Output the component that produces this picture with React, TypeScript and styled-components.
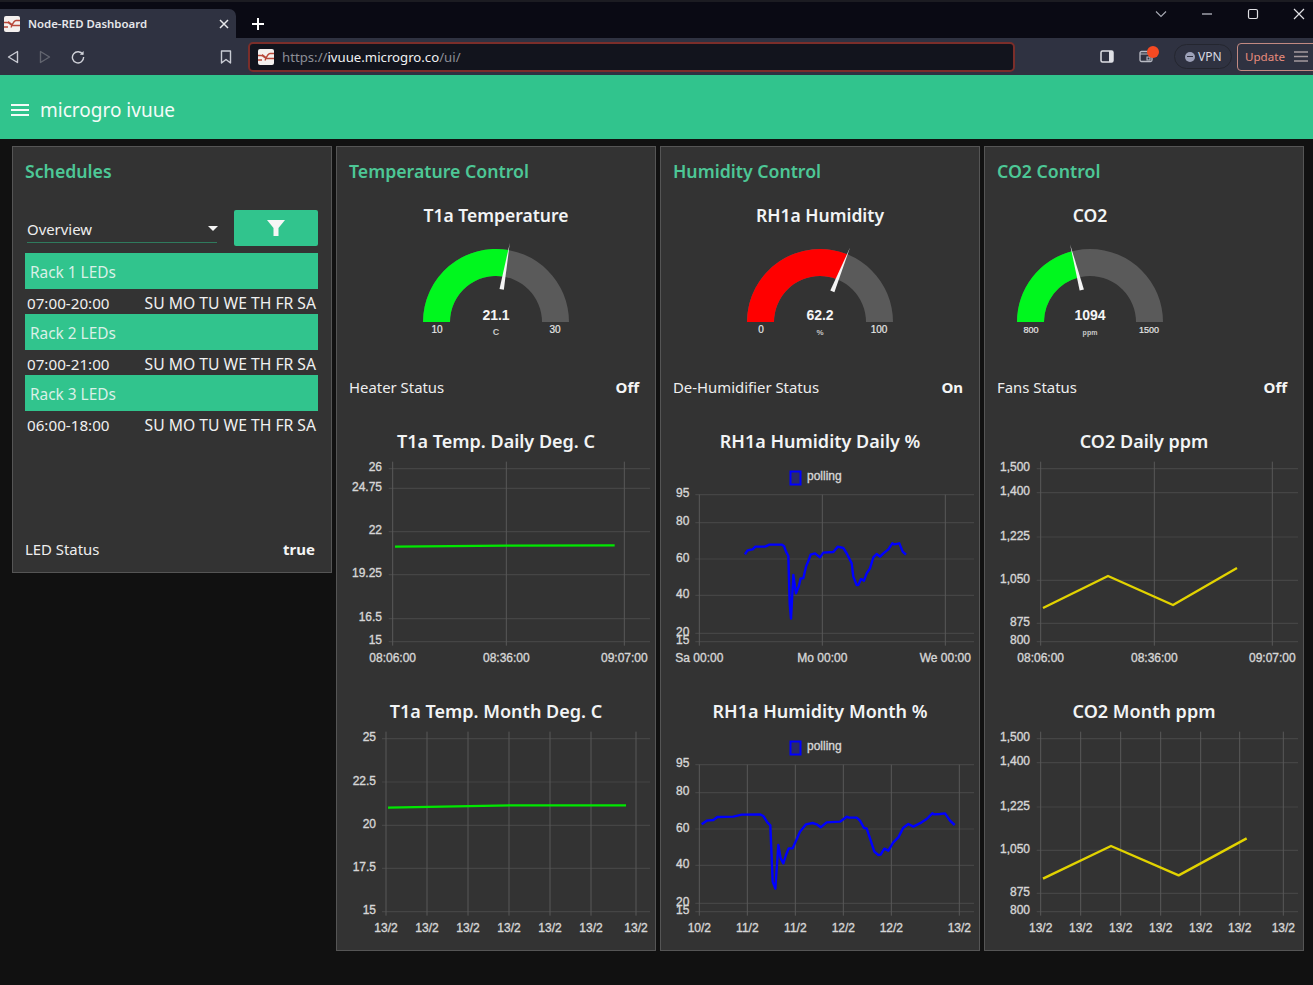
import React from "react";
import styled, { createGlobalStyle } from "styled-components";

const GREEN = "#31c48d";
const UI_FONT = `"Noto Sans", "Open Sans", sans-serif`;
const CHART_FONT = `"Liberation Sans", Arial, sans-serif`;

const Global = createGlobalStyle`
  html, body { margin: 0; padding: 0; background: #111111; }
  body { font-family: ${UI_FONT}; color: #eeeeee; }
  #root { min-height: 985px; }
`;

const Page = styled.div`
  width: 1313px;
  height: 985px;
  overflow: hidden;
  display: flex;
  flex-direction: column;
  background: #111111;
`;

/* ---------- browser chrome ---------- */
const TabStrip = styled.div`
  height: 38px;
  flex: none;
  display: flex;
  align-items: flex-end;
  background: #0a0a14;
  border-top: 2px solid #1c1c22;
  box-sizing: border-box;
`;
const Tab = styled.div`
  width: 236px;
  height: 29px;
  display: flex;
  align-items: center;
  box-sizing: border-box;
  padding: 0 7px 0 4px;
  background: #2f3241;
  border-top-right-radius: 7px;
`;
const TabTitle = styled.span`
  margin-left: 8px;
  flex: 1;
  font-size: 11.4px;
  font-weight: 600;
  color: #e6e7ea;
  white-space: nowrap;
`;
const NewTab = styled.div`
  width: 16px;
  height: 29px;
  margin-left: 15px;
  display: flex;
  align-items: center;
`;
const WindowControls = styled.div`
  margin-left: auto;
  align-self: flex-start;
  display: flex;
  align-items: flex-start;
  padding-top: 6px;
  gap: 34px;
  margin-right: 8px;
`;
const Toolbar = styled.div`
  height: 37px;
  flex: none;
  display: flex;
  align-items: center;
  background: #2f3241;
`;
const NavIcons = styled.div`
  width: 248px;
  flex: none;
  display: flex;
  align-items: center;
  padding-left: 6px;
  box-sizing: border-box;
`;
const NavSlot = styled.div<{ $w: number }>`
  width: ${(p) => p.$w}px;
  flex: none;
  display: flex;
  align-items: center;
`;
const UrlBar = styled.div`
  width: 767px;
  height: 30px;
  flex: none;
  display: flex;
  align-items: center;
  box-sizing: border-box;
  padding-left: 8px;
  background: #12141d;
  border: 2px solid #7b2e2a;
  border-radius: 5px;
`;
const UrlText = styled.span`
  margin-left: 8px;
  font-size: 13.2px;
  color: #8c8e96;
`;
const UrlHost = styled.span`
  color: #f0f1f3;
`;
const ToolbarRight = styled.div`
  flex: none;
  display: flex;
  align-items: center;
  padding-left: 85px;
`;
const VpnPill = styled.div`
  width: 58px;
  height: 25px;
  margin-left: 21px;
  flex: none;
  box-sizing: border-box;
  display: flex;
  align-items: center;
  gap: 3px;
  padding-left: 10px;
  border: 1px solid #24262f;
  border-radius: 13px;
  font-size: 12px;
  color: #d8dae2;
`;
const VpnDot = styled.span`
  width: 10px;
  height: 10px;
  border-radius: 50%;
  background: #9da1b8;
  display: flex;
  align-items: center;
  justify-content: center;
  &::after {
    content: "";
    width: 6px;
    height: 1.5px;
    background: #2f3241;
  }
`;
const UpdateButton = styled.div`
  margin-left: 5px;
  width: 80px;
  height: 28px;
  flex: none;
  box-sizing: border-box;
  display: flex;
  align-items: center;
  gap: 9px;
  padding-left: 7px;
  border: 1px solid #c28a82;
  border-radius: 4px;
  font-size: 11.6px;
  color: #e98d7e;
`;
const ToolIcon = styled.div<{ $ml: number }>`
  position: relative;
  margin-left: ${(p) => p.$ml}px;
  display: flex;
  flex: none;
`;
const Badge = styled.span`
  position: absolute;
  top: -4px;
  right: -6px;
  width: 12px;
  height: 12px;
  border-radius: 50%;
  background: #f64a22;
`;

/* ---------- dashboard header ---------- */
const AppBar = styled.header`
  height: 64px;
  flex: none;
  box-sizing: border-box;
  display: flex;
  align-items: center;
  padding: 6px 0 0 11px;
  gap: 11px;
  background: ${GREEN};
  color: #ffffff;
`;
const AppTitle = styled.h1`
  margin: 0;
  font-size: 19px;
  font-weight: 400;
  color: #f4fbf8;
`;
const Board = styled.main`
  display: flex;
  align-items: flex-start;
  gap: 4px;
  padding: 7px 0 0 12px;
`;
const Card = styled.section`
  width: 320px;
  flex: none;
  box-sizing: border-box;
  display: flex;
  flex-direction: column;
  background: #333333;
  border: 1px solid #555555;
`;
const CardTitle = styled.h2`
  margin: 0;
  height: 48px;
  box-sizing: border-box;
  padding: 0 0 0 12px;
  display: flex;
  align-items: center;
  font-size: 17.7px;
  font-weight: 600;
  color: #4dc796;
`;
const WidgetTitle = styled.h3<{ $top?: number }>`
  margin: ${(p) => p.$top ?? 0}px 0 0;
  height: 36px;
  box-sizing: border-box;
  padding-bottom: 1px;
  display: flex;
  align-items: center;
  justify-content: center;
  font-size: 18px;
  font-weight: 600;
  color: #f2f4f5;
`;
const GaugeWidget = styled.div<{ $width: number }>`
  width: ${(p) => p.$width}px;
  display: flex;
  flex-direction: column;
`;
const GaugeHeading = styled(WidgetTitle)`
  margin-top: 2px;
  margin-bottom: 2px;
  padding-bottom: 1px;
  font-size: 17.5px;
`;
const GaugeSvg = styled.svg`
  display: block;
  align-self: center;
  width: 190px;
  height: 133px;
`;
const StatusRow = styled.div<{ $top?: number; $bottom?: number }>`
  height: 40px;
  box-sizing: border-box;
  margin: ${(p) => p.$top ?? 0}px 0 ${(p) => p.$bottom ?? 0}px;
  padding: 0 16px 2px 12px;
  display: flex;
  align-items: baseline;
  justify-content: space-between;
  line-height: 38px;
  font-size: 14.9px;
  color: #eeeeee;
`;
const StatusValue = styled.span`
  font-weight: 700;
  font-size: 15px;
  color: #f5f5f5;
`;
const ChartSvg = styled.svg<{ $gap: number }>`
  display: block;
  width: 318px;
  height: 221px;
  margin-bottom: ${(p) => p.$gap}px;
`;

/* ---------- schedules ---------- */
const Controls = styled.div`
  height: 36px;
  margin: 15px 13px 7px 12px;
  display: flex;
  justify-content: space-between;
`;
const SelectBox = styled.div`
  position: relative;
  width: 190px;
  margin-left: 2px;
  height: 33px;
  box-sizing: border-box;
  display: flex;
  align-items: flex-end;
  padding-bottom: 3px;
  border-bottom: 1px solid #2f7a5d;
  font-size: 14.9px;
  color: #eeeeee;
  &::after {
    content: "";
    position: absolute;
    right: -1px;
    top: 16px;
    border-left: 5px solid transparent;
    border-right: 5px solid transparent;
    border-top: 5px solid #f5f5f5;
  }
`;
const FilterButton = styled.div`
  width: 84px;
  height: 36px;
  display: flex;
  align-items: center;
  justify-content: center;
  background: ${GREEN};
  border-radius: 2px;
`;
const RackHeader = styled.div`
  height: 36px;
  box-sizing: border-box;
  margin: 0 13px 0 12px;
  padding: 2px 0 0 5px;
  display: flex;
  align-items: center;
  background: ${GREEN};
  font-size: 15.4px;
  color: #d9f0e7;
`;
const ScheduleRow = styled.div`
  height: 25px;
  box-sizing: border-box;
  margin: 0 15px 0 14px;
  display: flex;
  align-items: baseline;
  justify-content: space-between;
  line-height: 28px;
  font-size: 15.2px;
  color: #f0f0f0;
  white-space: nowrap;
`;
const DayList = styled.span`
  font-size: 15.7px;
`;

/* ---------- drawings ---------- */
const Favicon = () => (
  <svg width="16" height="16" viewBox="0 0 16 16" style={{ flex: "none" }}>
    <rect width="16" height="16" rx="2" fill="#f4f0ee" />
    <path d="M0 6.5h3c3 0 3 3 6 3h7M4 5.5l4 3M7 11.5c2-5 3-7 5-7h4M0 11h4" stroke="#b8483a" strokeWidth="1.3" fill="none" />
  </svg>
);

type Pt = [number, number];
const polar = (cx: number, cy: number, r: number, frac: number): Pt => {
  const a = Math.PI * (1 - frac);
  return [cx + r * Math.cos(a), cy - r * Math.sin(a)];
};
const sector = (cx: number, cy: number, R: number, r: number, from: number, to: number) => {
  const [ax, ay] = polar(cx, cy, R, from);
  const [bx, by] = polar(cx, cy, R, to);
  const [dx, dy] = polar(cx, cy, r, to);
  const [ex, ey] = polar(cx, cy, r, from);
  return `M${ax} ${ay}A${R} ${R} 0 0 1 ${bx} ${by}L${dx} ${dy}A${r} ${r} 0 0 0 ${ex} ${ey}Z`;
};

type GaugeProps = {
  value: string;
  unit: string;
  min: string;
  max: string;
  frac: number;
  color: string;
  unitSize: number;
  rangeSize: number;
};
const Gauge = ({ value, unit, min, max, frac, color, unitSize, rangeSize }: GaugeProps) => {
  const cx = 95;
  const cy = 87;
  const a = Math.PI * (1 - frac);
  const nx = -Math.sin(a) * 2.2;
  const ny = -Math.cos(a) * 2.2;
  const [bx, by] = polar(cx, cy, 33, frac);
  const [tx, ty] = polar(cx, cy, 80, frac);
  return (
    <GaugeSvg viewBox="0 0 190 133">
      <path d={sector(cx, cy, 73, 46, 0, 1)} fill="#5a5a5a" />
      <path d={sector(cx, cy, 73, 46, 0, frac)} fill={color} />
      <path d={`M${bx + nx} ${by + ny}L${tx} ${ty}L${bx - nx} ${by - ny}Z`} fill="#f4f4f4" />
      <g fontFamily={CHART_FONT} textAnchor="middle" fill="#e6e6e6">
        <text x={cx} y={85} fontSize="14" fontWeight="700" fill="#f5f5f5">{value}</text>
        <text x={cx} y={100} fontSize={unitSize} fontWeight="700" fill="#c8c8c8">{unit}</text>
        <text x={cx - 59} y={98} fontSize={rangeSize} stroke="#e6e6e6" strokeWidth="0.2">{min}</text>
        <text x={cx + 59} y={98} fontSize={rangeSize} stroke="#e6e6e6" strokeWidth="0.2">{max}</text>
      </g>
    </GaugeSvg>
  );
};

type Tick = [string, number];
type ChartProps = {
  yTicks: Tick[];
  xTicks: Tick[];
  labelRight: number;
  left: number;
  line: Pt[];
  color: string;
  legend?: boolean;
  gap?: number;
  top: number;
};
const Chart = ({ yTicks, xTicks, labelRight, left, line, color, legend, gap = 0, top }: ChartProps) => {
  const px = (v: number) => v / 3;
  const py = (v: number) => v / 3 - 29;
  const bottom = py(635);
  return (
    <ChartSvg $gap={gap} viewBox="1 0 318 221">
      {yTicks.map(([t, y]) => (
        <line key={t + y} x1={px(left) - 4} x2={314} y1={py(y)} y2={py(y)} stroke="#454545" strokeWidth="1.2" />
      ))}
      {xTicks.map(([t, x]) => (
        <line key={t + x} x1={px(x)} x2={px(x)} y1={py(top)} y2={bottom + 4} stroke="#585858" strokeWidth="1" />
      ))}
      <g fontFamily={CHART_FONT} fontSize="12" fill="#d6d6d6" stroke="#d6d6d6" strokeWidth="0.35">
        {yTicks.map(([t, y]) => (
          <text key={t + y} x={px(labelRight)} y={py(y) + 2.5} textAnchor="end">{t}</text>
        ))}
        {xTicks.map(([t, x]) => (
          <text key={t + x} x={px(x)} y={bottom + 20} textAnchor="middle">{t}</text>
        ))}
      </g>
      {legend && (
        <g>
          <rect x={130.5} y={12.5} width={10} height={13} fill="#2a2a66" stroke="#0000ff" strokeWidth="2" />
          <text x={147} y={21} fontFamily={CHART_FONT} fontSize="12" fill="#d6d6d6" stroke="#d6d6d6" strokeWidth="0.35">polling</text>
        </g>
      )}
      <polyline
        points={line.map(([x, y]) => `${px(x)},${py(y)}`).join(" ")}
        fill="none"
        stroke={color}
        strokeWidth="2.4"
        strokeLinejoin="round"
      />
    </ChartSvg>
  );
};

/* ---------- data ---------- */
const HUM_Y: Tick[] = [["95", 194], ["80", 278], ["60", 387], ["40", 496], ["20", 610], ["15", 635]];
const TEMP_Y: Tick[] = [["26", 116], ["24.75", 175], ["22", 305], ["19.25", 434], ["16.5", 566], ["15", 635]];
const TEMP_M_Y: Tick[] = [["25", 116], ["22.5", 246], ["20", 376], ["17.5", 505], ["15", 635]];
const CO2_Y: Tick[] = [["1,500", 116], ["1,400", 188], ["1,225", 321], ["1,050", 451], ["875", 580], ["800", 635]];

const TIME_X: Tick[] = [["08:06:00", 170], ["08:36:00", 511], ["09:07:00", 865]];
const D_X: Tick[] = [["Sa 00:00", 118], ["Mo 00:00", 487], ["We 00:00", 856]];
const HM_X: Tick[] = [["10/2", 118], ["11/2", 262], ["11/2", 406], ["12/2", 550], ["12/2", 694], ["13/2", 898]];
const TM_X: Tick[] = [["13/2", 150], ["13/2", 273], ["13/2", 396], ["13/2", 519], ["13/2", 642], ["13/2", 765], ["13/2", 900]];
const CM_X: Tick[] = [["13/2", 170], ["13/2", 290], ["13/2", 410], ["13/2", 530], ["13/2", 650], ["13/2", 767], ["13/2", 898]];

const HUM_DAILY: Pt[] = [[255,373],[262,362],[272,359],[278,358],[286,350],[315,350],[328,344],[365,344],[372,348],[378,365],[385,378],[389,520],[393,566],[400,435],[408,490],[416,470],[422,445],[430,445],[438,410],[445,393],[452,374],[465,370],[480,382],[490,368],[520,366],[533,350],[550,354],[560,370],[575,400],[580,440],[590,465],[595,465],[603,447],[612,452],[620,430],[630,415],[640,382],[650,372],[660,380],[670,370],[685,358],[697,340],[703,343],[718,340],[728,365],[738,374]];
const HUM_MONTH: Pt[] = [[125,373],[140,362],[160,360],[172,351],[220,350],[245,344],[300,343],[310,348],[322,367],[331,376],[338,545],[346,566],[355,435],[362,475],[370,490],[378,465],[386,445],[398,445],[420,395],[438,373],[458,369],[470,373],[482,382],[500,367],[540,365],[560,350],[567,353],[590,353],[600,362],[612,384],[620,385],[630,415],[643,455],[655,465],[662,464],[673,446],[685,452],[700,427],[715,412],[730,383],[745,372],[760,380],[785,367],[800,357],[817,340],[823,343],[840,342],[855,340],[870,362],[884,375]];
const TEMP_DAILY: Pt[] = [[177,350],[510,347],[836,346]];
const TEMP_MONTH: Pt[] = [[156,323],[522,316],[870,316]];
const CO2_DAILY: Pt[] = [[177,534],[372,438],[567,525],[759,414]];
const CO2_MONTH: Pt[] = [[177,536],[381,438],[584,526],[788,415]];

const DAYS = "SU MO TU WE TH FR SA";
const RACKS = [
  ["Rack 1 LEDs", "07:00-20:00"],
  ["Rack 2 LEDs", "07:00-21:00"],
  ["Rack 3 LEDs", "06:00-18:00"],
];

export default function App() {
  return (
    <Page>
      <Global />
      <TabStrip>
        <Tab>
          <Favicon />
          <TabTitle>Node-RED Dashboard</TabTitle>
          <svg width="10" height="10" viewBox="0 0 10 10">
            <path d="M1 1l8 8M9 1l-8 8" stroke="#e6e7ea" strokeWidth="1.5" />
          </svg>
        </Tab>
        <NewTab>
          <svg width="14" height="14" viewBox="0 0 14 14">
            <path d="M7 1v12M1 7h12" stroke="#ffffff" strokeWidth="2" />
          </svg>
        </NewTab>
        <WindowControls>
          <svg width="12" height="12" viewBox="0 0 12 12">
            <path d="M1 3.5l5 5 5-5" stroke="#a9abb5" strokeWidth="1.1" fill="none" />
          </svg>
          <svg width="12" height="12" viewBox="0 0 12 12">
            <path d="M1 6h10" stroke="#a9abb5" strokeWidth="1.4" />
          </svg>
          <svg width="12" height="12" viewBox="0 0 12 12">
            <rect x="1.5" y="1.5" width="9" height="9" rx="1.5" stroke="#e0e0e4" strokeWidth="1.2" fill="none" />
          </svg>
          <svg width="12" height="12" viewBox="0 0 12 12">
            <path d="M1 1l10 10M11 1L1 11" stroke="#e0e0e4" strokeWidth="1.2" />
          </svg>
        </WindowControls>
      </TabStrip>
      <Toolbar>
        <NavIcons>
          <NavSlot $w={32}>
            <svg width="14" height="14" viewBox="0 0 14 14">
              <path d="M11.5 1.5v11L2.5 7z" stroke="#c9cbd3" strokeWidth="1.4" fill="none" strokeLinejoin="round" />
            </svg>
          </NavSlot>
          <NavSlot $w={33}>
            <svg width="14" height="14" viewBox="0 0 14 14">
              <path d="M2.5 1.5v11L11.5 7z" stroke="#62656f" strokeWidth="1.4" fill="none" strokeLinejoin="round" />
            </svg>
          </NavSlot>
          <NavSlot $w={149}>
            <svg width="14" height="14" viewBox="0 0 14 14">
              <path d="M11.8 4.4A5.6 5.6 0 1 0 12.6 7" stroke="#d0d2d9" strokeWidth="1.4" fill="none" />
              <path d="M12.6 1v3.8H8.8z" fill="#d0d2d9" />
            </svg>
          </NavSlot>
          <NavSlot $w={14}>
            <svg width="12" height="14" viewBox="0 0 12 14">
              <path d="M1.5 1h9v12L6 9.5 1.5 13z" stroke="#c9cbd3" strokeWidth="1.4" fill="none" strokeLinejoin="round" />
            </svg>
          </NavSlot>
        </NavIcons>
        <UrlBar>
          <Favicon />
          <UrlText>
            https://<UrlHost>ivuue.microgro.co</UrlHost>/ui/
          </UrlText>
        </UrlBar>
        <ToolbarRight>
          <ToolIcon $ml={0}>
            <svg width="14" height="13" viewBox="0 0 14 13">
              <rect x="1" y="1" width="12" height="11" rx="1.5" stroke="#dfe0e5" strokeWidth="1.5" fill="none" />
              <rect x="9" y="1" width="4" height="11" fill="#dfe0e5" />
            </svg>
          </ToolIcon>
          <ToolIcon $ml={25}>
            <svg width="14" height="13" viewBox="0 0 14 13">
              <rect x="1" y="1.5" width="12" height="10" rx="1.5" stroke="#b9bbc4" strokeWidth="1.3" fill="none" />
              <path d="M1 4h12M8 7h3v3H8z" stroke="#b9bbc4" strokeWidth="1.1" fill="none" />
            </svg>
            <Badge />
          </ToolIcon>
          <VpnPill>
            <VpnDot />
            VPN
          </VpnPill>
          <UpdateButton>
            Update
            <svg width="14" height="11" viewBox="0 0 14 11">
              <path d="M0 1h14M0 5.5h14M0 10h14" stroke="#a59a9e" strokeWidth="1.5" />
            </svg>
          </UpdateButton>
        </ToolbarRight>
      </Toolbar>

      <AppBar>
        <svg width="18" height="12" viewBox="0 0 18 12">
          <path d="M0 1h18M0 6h18M0 11h18" stroke="#f4fbf8" strokeWidth="2" />
        </svg>
        <AppTitle>microgro ivuue</AppTitle>
      </AppBar>

      <Board>
        <Card>
          <CardTitle>Schedules</CardTitle>
          <Controls>
            <SelectBox>Overview</SelectBox>
            <FilterButton>
              <svg width="18" height="16" viewBox="0 0 18 16">
                <path d="M0 0h18l-6.5 8v8h-5V8z" fill="#f6f6f6" />
              </svg>
            </FilterButton>
          </Controls>
          {RACKS.map(([name, time]) => (
            <React.Fragment key={name}>
              <RackHeader>{name}</RackHeader>
              <ScheduleRow>
                <span>{time}</span>
                <DayList>{DAYS}</DayList>
              </ScheduleRow>
            </React.Fragment>
          ))}
          <StatusRow $top={94} $bottom={2}>
            <span>LED Status</span>
            <StatusValue>true</StatusValue>
          </StatusRow>
        </Card>

        <Card>
          <CardTitle>Temperature Control</CardTitle>
          <GaugeWidget $width={318}>
            <GaugeHeading>T1a Temperature</GaugeHeading>
            <Gauge value="21.1" unit="C" min="10" max="30" frac={0.555} color="#00f71e" unitSize={9} rangeSize={10} />
          </GaugeWidget>
          <StatusRow>
            <span>Heater Status</span>
            <StatusValue>Off</StatusValue>
          </StatusRow>
          <WidgetTitle $top={15}>T1a Temp. Daily Deg. C</WidgetTitle>
          <Chart yTicks={TEMP_Y} xTicks={TIME_X} labelRight={138} left={170} top={95} line={TEMP_DAILY} color="#00e800" gap={13} />
          <WidgetTitle>T1a Temp. Month Deg. C</WidgetTitle>
          <Chart yTicks={TEMP_M_Y} xTicks={TM_X} labelRight={120} left={150} top={95} line={TEMP_MONTH} color="#00e800" />
        </Card>

        <Card>
          <CardTitle>Humidity Control</CardTitle>
          <GaugeWidget $width={318}>
            <GaugeHeading>RH1a Humidity</GaugeHeading>
            <Gauge value="62.2" unit="%" min="0" max="100" frac={0.622} color="#ff0000" unitSize={8} rangeSize={10} />
          </GaugeWidget>
          <StatusRow>
            <span>De-Humidifier Status</span>
            <StatusValue>On</StatusValue>
          </StatusRow>
          <WidgetTitle $top={15}>RH1a Humidity Daily %</WidgetTitle>
          <Chart yTicks={HUM_Y} xTicks={D_X} labelRight={88} left={118} top={194} line={HUM_DAILY} color="#0000ff" legend gap={13} />
          <WidgetTitle>RH1a Humidity Month %</WidgetTitle>
          <Chart yTicks={HUM_Y} xTicks={HM_X} labelRight={88} left={118} top={194} line={HUM_MONTH} color="#0000ff" legend />
        </Card>

        <Card>
          <CardTitle>CO2 Control</CardTitle>
          <GaugeWidget $width={210}>
            <GaugeHeading>CO2</GaugeHeading>
            <Gauge value="1094" unit="ppm" min="800" max="1500" frac={0.42} color="#00f71e" unitSize={7} rangeSize={9} />
          </GaugeWidget>
          <StatusRow>
            <span>Fans Status</span>
            <StatusValue>Off</StatusValue>
          </StatusRow>
          <WidgetTitle $top={15}>CO2 Daily ppm</WidgetTitle>
          <Chart yTicks={CO2_Y} xTicks={TIME_X} labelRight={138} left={170} top={95} line={CO2_DAILY} color="#e2d300" gap={13} />
          <WidgetTitle>CO2 Month ppm</WidgetTitle>
          <Chart yTicks={CO2_Y} xTicks={CM_X} labelRight={138} left={170} top={95} line={CO2_MONTH} color="#e2d300" />
        </Card>
      </Board>
    </Page>
  );
}
